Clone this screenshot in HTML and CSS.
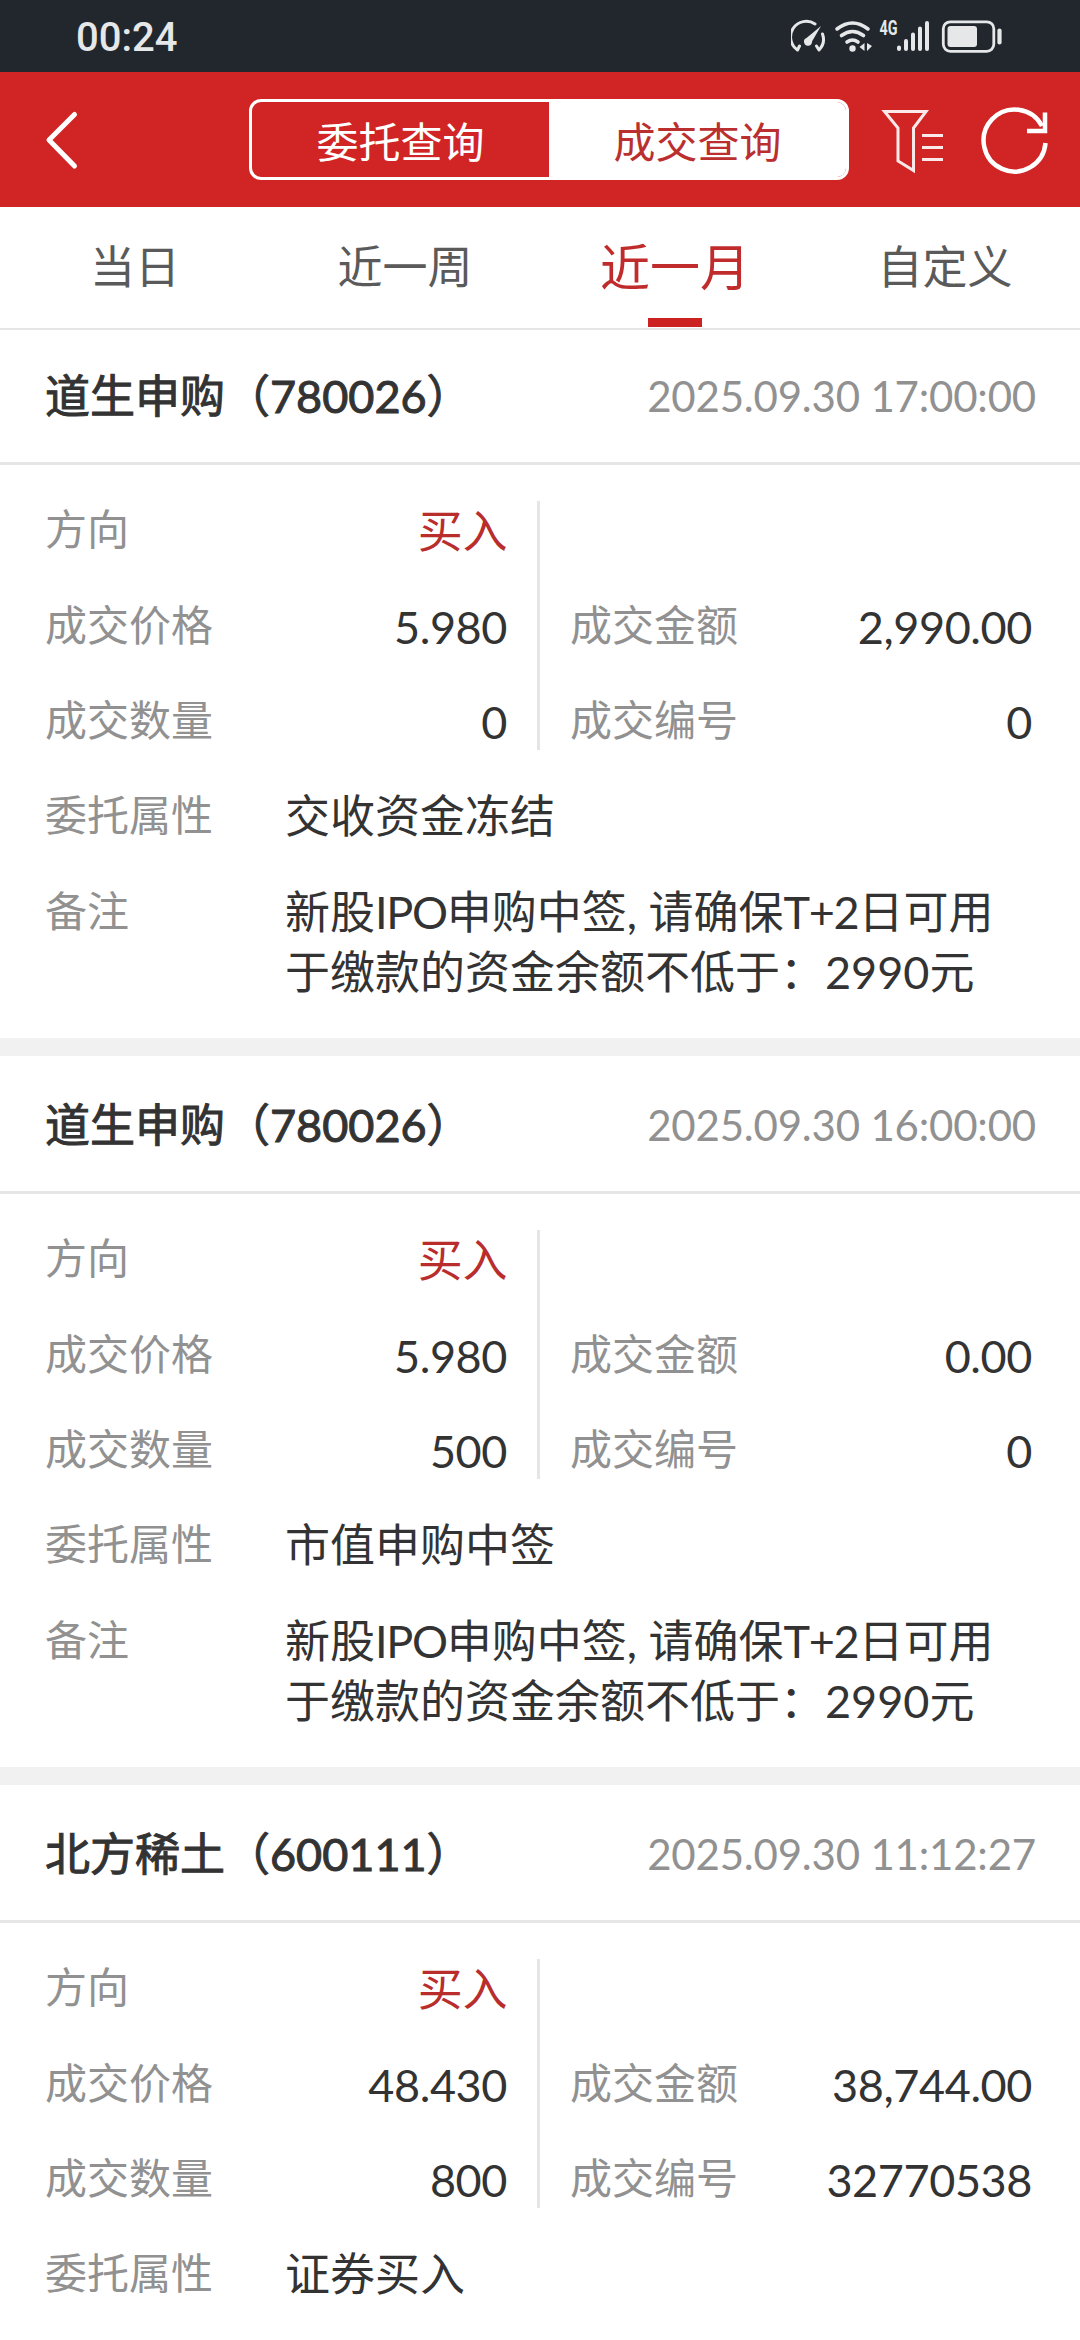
FILE: index.html
```
<!DOCTYPE html>
<html lang="zh-CN">
<head>
    <meta charset="UTF-8">
    <title>成交查询</title>
    <link rel="stylesheet" href="styles.css">
</head>
<body>
<div class="status-bar">
    <span class="clock">00:24</span>
    <svg class="status-icons" width="220" height="48" viewBox="0 -8 220 48" fill="none" stroke="#e6e7e9" stroke-linecap="round">
        <!-- speed -->
        <path d="M6.500 30A15.500 15.500 0 0 1 24 4M31.500 14A15.500 15.500 0 0 1 28 30M6.500 30l2-4M28 30l-2.500-4" stroke-width="3"/>
        <path d="M30 6L15.500 18a4 4 0 1 0 5.500 3.500z" fill="#e6e7e9" stroke="none"/>
        <!-- wifi -->
        <path d="M46 9q15.500-12 31 0M50.500 15.500q11-8 22 0M56 22q5.500-4 11 0" stroke-width="3.600"/>
        <circle cx="61.500" cy="28.500" r="3.200" fill="#e6e7e9" stroke="none"/>
        <path d="M73.500 23v8l-5-4zM76 23v8l5-5z" fill="#e6e7e9" stroke="none"/>
        <text class="net" x="88.500" y="14.700" textLength="18" lengthAdjust="spacingAndGlyphs">4G</text>
        <!-- signal -->
        <path d="M108 27.500v1.500M115 21v8M122 14.500v14.500M129 8.500v20.500M136 3v26" stroke-width="4"/>
        <!-- battery -->
        <rect x="152.300" y="1.800" width="50.500" height="29.500" rx="7" stroke-width="2.800"/>
        <rect x="156.500" y="6" width="29.500" height="21" rx="3" fill="#e6e7e9" stroke="none"/>
        <path d="M208.500 10.500v12" stroke-width="4.200"/>
    </svg>
</div>

<header class="nav-bar">
    <svg class="back" width="40" height="64" viewBox="0 0 40 64" fill="none" stroke="#fff" stroke-width="5" stroke-linecap="round" stroke-linejoin="round">
        <path d="M34.500 6.500L9 32l25.500 26"/>
    </svg>
    <div class="segment">
        <div class="segment-item">委托查询</div>
        <div class="segment-item active">成交查询</div>
    </div>
    <svg class="filter" width="64" height="68" viewBox="0 0 64 68" fill="none" stroke="#fff" stroke-opacity=".9" stroke-width="3">
        <path d="M4.500 5.500H46L33.500 22v42.500L18 55V22z"/>
        <path d="M42 29.500h21M42 41.500h21M42 53.500h21"/>
    </svg>
    <svg class="refresh" width="68" height="68" viewBox="0 0 68 68" fill="none" stroke="#fff" stroke-width="4.500">
        <path d="M64.500 37A31 31 0 1 1 61 20"/>
        <path d="M64 6.500v18.500H46"/>
    </svg>
</header>

<nav class="tabs">
    <div class="tab">当日</div>
    <div class="tab">近一周</div>
    <div class="tab active">近一月</div>
    <div class="tab">自定义</div>
</nav>

<main class="list">
    <section class="card">
        <div class="card-head">
            <h2 class="name">道生申购（780026）</h2>
            <span class="time">2025.09.30 17:00:00</span>
        </div>
        <div class="grid">
            <div class="col">
                <div class="row"><span class="label">方向</span><span class="value buy">买入</span></div>
                <div class="row"><span class="label">成交价格</span><span class="value">5.980</span></div>
                <div class="row"><span class="label">成交数量</span><span class="value">0</span></div>
            </div>
            <div class="col">
                <div class="row"></div>
                <div class="row"><span class="label">成交金额</span><span class="value">2,990.00</span></div>
                <div class="row"><span class="label">成交编号</span><span class="value">0</span></div>
            </div>
        </div>
        <div class="line"><span class="label">委托属性</span><span class="text">交收资金冻结</span></div>
        <div class="line"><span class="label">备注</span><span class="text">新股<span class="latin">IPO</span>申购中签, 请确保<span class="latin">T+2</span>日可用于缴款的资金余额不低于：2990元</span></div>
    </section>

    <section class="card">
        <div class="card-head">
            <h2 class="name">道生申购（780026）</h2>
            <span class="time">2025.09.30 16:00:00</span>
        </div>
        <div class="grid">
            <div class="col">
                <div class="row"><span class="label">方向</span><span class="value buy">买入</span></div>
                <div class="row"><span class="label">成交价格</span><span class="value">5.980</span></div>
                <div class="row"><span class="label">成交数量</span><span class="value">500</span></div>
            </div>
            <div class="col">
                <div class="row"></div>
                <div class="row"><span class="label">成交金额</span><span class="value">0.00</span></div>
                <div class="row"><span class="label">成交编号</span><span class="value">0</span></div>
            </div>
        </div>
        <div class="line"><span class="label">委托属性</span><span class="text">市值申购中签</span></div>
        <div class="line"><span class="label">备注</span><span class="text">新股<span class="latin">IPO</span>申购中签, 请确保<span class="latin">T+2</span>日可用于缴款的资金余额不低于：2990元</span></div>
    </section>

    <section class="card">
        <div class="card-head">
            <h2 class="name">北方稀土（600111）</h2>
            <span class="time">2025.09.30 11:12:27</span>
        </div>
        <div class="grid">
            <div class="col">
                <div class="row"><span class="label">方向</span><span class="value buy">买入</span></div>
                <div class="row"><span class="label">成交价格</span><span class="value">48.430</span></div>
                <div class="row"><span class="label">成交数量</span><span class="value">800</span></div>
            </div>
            <div class="col">
                <div class="row"></div>
                <div class="row"><span class="label">成交金额</span><span class="value">38,744.00</span></div>
                <div class="row"><span class="label">成交编号</span><span class="value">32770538</span></div>
            </div>
        </div>
        <div class="line"><span class="label">委托属性</span><span class="text">证券买入</span></div>
    </section>
</main>
</body>
</html>
```
FILE: styles.css
```
* {
    box-sizing: border-box;
}

body {
    margin: 0;
    height: 2340px;
    overflow: hidden;
    background-color: #fff;
    color: #333;
    font-family: Lato, "Noto Sans CJK SC", sans-serif;
    font-size: 45px;
}

svg {
    display: block;
    flex: none;
}

.status-bar {
    display: flex;
    justify-content: space-between;
    height: 72px;
    padding: 0 69px 0 76px;
    background-color: #22272e;
}

.clock {
    color: #e6e7e9;
    font-family: Roboto, sans-serif;
    font-size: 40px;
    font-weight: 500;
    line-height: 76px;
}

.status-icons {
    margin-top: 12px;
}

.net {
    fill: #e6e7e9;
    stroke: none;
    font-family: Roboto, sans-serif;
    font-size: 19.5px;
    font-weight: bold;
}

.nav-bar {
    display: flex;
    align-items: center;
    height: 135px;
    padding: 0 31px 0 40px;
    background-color: #d12425;
}

.segment {
    display: flex;
    width: 600px;
    height: 81px;
    margin-left: 169px;
    border: 3px solid #fff;
    border-radius: 12px;
    overflow: hidden;
}

.segment-item {
    flex: 1;
    color: #fff;
    font-size: 42px;
    line-height: 80px;
    text-align: center;
}

.segment-item.active {
    background-color: #fff;
    color: #bb2f2f;
}

.filter {
    margin-left: 31px;
}

.refresh {
    margin-left: auto;
}

.tabs {
    display: flex;
    height: 123px;
    border-bottom: 2px solid #e6e6e6;
}

.tab {
    display: flex;
    flex: 1;
    flex-direction: column;
    align-items: center;
    color: #5a5a5a;
    font-size: 45px;
    line-height: 121px;
}

.tab.active {
    color: #c02c2c;
    font-size: 50px;
}

.tab.active::after {
    content: "";
    width: 54px;
    height: 9px;
    margin-top: -10px;
    background-color: #cc2222;
}

.list {
    margin-top: -3px;
}

.card {
    border-bottom: 18px solid #f1f1f1;
}

.card:last-child {
    border-bottom: none;
}

.card-head {
    display: flex;
    justify-content: space-between;
    align-items: center;
    height: 138px;
    padding: 0 44px 0 45px;
    border-bottom: 3px solid #e6e6e6;
}

.name {
    margin: 0;
    padding-bottom: 2px;
    font-size: 45px;
    font-weight: 400;
    -webkit-text-stroke: 1px #333;
}

.time {
    padding-top: 3px;
    color: #919191;
    font-size: 42px;
    letter-spacing: -0.2px;
}

.grid {
    display: flex;
    padding-top: 36px;
}

.col {
    width: 540px;
    height: 249px;
    padding: 0 30px 0 45px;
}

.col + .col {
    padding: 0 48px 0 30px;
}

.col:first-child {
    border-right: 3px solid #e5e5e5;
}

.row {
    display: flex;
    justify-content: space-between;
    height: 95.5px;
    line-height: 60px;
}

.value {
    letter-spacing: -0.4px;
}

.label {
    color: #919191;
    font-size: 42px;
    line-height: 56px;
}

.buy {
    color: #b92d2d;
}

.line {
    display: flex;
    padding: 36px 45px 0;
    line-height: 60px;
}

.line .label {
    flex: none;
    width: 240px;
    line-height: 59px;
}

.line:last-child {
    padding-bottom: 36px;
}

.text {
    flex: 1;
}

.latin {
    letter-spacing: -1.3px;
}
```
